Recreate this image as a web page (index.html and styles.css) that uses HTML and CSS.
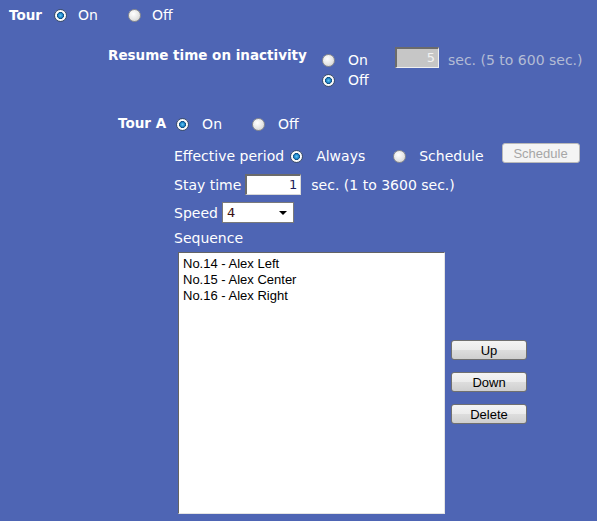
FILE: index.html
```html
<!DOCTYPE html>
<html>
<head>
<meta charset="utf-8">
<link rel="stylesheet" href="styles.css">
</head>
<body>
<div class="page">
  <div class="row row-tour">
    <span class="lbl-b">Tour</span>
    <span class="radio on r-tour-on"></span><span class="opt">On</span>
    <span class="radio r-tour-off"></span><span class="opt">Off</span>
  </div>

  <div class="row-resume">
    <div class="lbl-b resume-lbl">Resume time on inactivity</div>
    <div class="resume-radios">
      <div class="rline"><span class="radio"></span><span class="opt">On</span></div>
      <div class="rline"><span class="radio on"></span><span class="opt">Off</span></div>
    </div>
    <div class="field disabled resume-field">5</div>
    <div class="hint-dis">sec. (5 to 600 sec.)</div>
  </div>

  <div class="row row-toura">
    <span class="lbl-b">Tour A</span>
    <span class="radio on r-a-on"></span><span class="opt">On</span>
    <span class="radio r-a-off"></span><span class="opt">Off</span>
  </div>

  <div class="inner">
    <div class="row row-eff">
      <span class="txt">Effective period</span>
      <span class="radio on r-always"></span><span class="opt">Always</span>
      <span class="radio r-sched"></span><span class="opt">Schedule</span>
      <button class="btn-dis">Schedule</button>
    </div>
    <div class="row row-stay">
      <span class="txt">Stay time</span>
      <span class="field stay-field">1</span>
      <span class="txt sec">sec. (1 to 3600 sec.)</span>
    </div>
    <div class="row row-speed">
      <span class="txt">Speed</span>
      <span class="select"><span class="sel-val">4</span><span class="caret"></span></span>
    </div>
    <div class="row row-seq">
      <span class="txt">Sequence</span>
    </div>
    <div class="seq-area">
      <div class="listbox">
        <div class="item">No.14 - Alex Left</div>
        <div class="item">No.15 - Alex Center</div>
        <div class="item">No.16 - Alex Right</div>
      </div>
      <div class="btns">
        <button class="btn">Up</button>
        <button class="btn">Down</button>
        <button class="btn">Delete</button>
      </div>
    </div>
  </div>
</div>
</body>
</html>
```
FILE: styles.css
```css
html, body {
  margin: 0;
  padding: 0;
  background: #4e65b4;
}
body {
  width: 597px;
  height: 521px;
  overflow: hidden;
  font-family: "DejaVu Sans", Verdana, sans-serif;
  font-size: 14px;
  line-height: 16px;
  color: #ffffff;
}
.page {
  padding-top: 5px;
}
.row {
  display: flex;
  align-items: center;
  white-space: nowrap;
}
.lbl-b {
  font-weight: bold;
  font-size: 13.5px;
}
.radio {
  width: 11px;
  height: 11px;
  border-radius: 50%;
  border: 1px solid #8e8f8f;
  background: radial-gradient(circle at 40% 35%, #ffffff 0%, #e6e6e6 55%, #c9c9c9 100%);
  flex: none;
  box-sizing: content-box;
}
.radio.on {
  border-color: #3d4f6a;
  background: radial-gradient(circle at 50% 50%, #62c4f2 0%, #1e86c8 28%, #114a7c 42%, #ffffff 48%, #f3f3f3 70%, #d9d9d9 100%);
}

/* Tour */
.row-tour {
  height: 20px;
  padding-left: 9px;
}
.r-tour-on { margin-left: 12px; }
.row-tour .opt { margin-left: 11px; }
.r-tour-off { margin-left: 30px; }

/* Resume */
.row-resume {
  display: flex;
  align-items: flex-start;
  margin-top: 21px;
  height: 68px;
  white-space: nowrap;
}
.resume-lbl {
  margin-left: 108px;
  width: 214px;
  margin-top: 1px;
}
.resume-radios {
  margin-top: 4px;
  width: 73px;
  display: flex;
  flex-direction: column;
}
.rline {
  height: 20px;
  display: flex;
  align-items: center;
}
.rline .opt { margin-left: 13px; }
.field {
  box-sizing: border-box;
  height: 21px;
  border-top: 2px solid #6b6b6b;
  border-left: 2px solid #6b6b6b;
  border-right: 1px solid #d8d8d8;
  border-bottom: 1px solid #d8d8d8;
  background: #ffffff;
  color: #1d1d5c;
  text-align: right;
  padding-right: 3px;
  line-height: 18px;
  font-size: 13px;
}
.field.disabled {
  background: #c6c6c6;
  color: #f2f2f2;
  border-right-color: #f0f0f0;
  border-bottom-color: #f0f0f0;
}
.resume-field {
  width: 44px;
  margin-top: 1px;
}
.hint-dis {
  margin-left: 9px;
  margin-top: 6px;
  color: #b3bcd4;
}

/* Tour A */
.row-toura {
  height: 20px;
  padding-left: 118px;
}
.row-toura .lbl-b { position: relative; top: -1px; }
.r-a-on { margin-left: 10px; }
.row-toura .opt { margin-left: 13px; }
.r-a-off { margin-left: 30px; }

/* Inner */
.inner {
  padding-left: 174px;
  margin-top: 12px;
}
.row-eff { height: 20px; }
.r-always { margin-left: 6px; }
.row-eff .opt { margin-left: 13px; }
.r-sched { margin-left: 28px; }
.btn-dis {
  margin-left: 18px;
  width: 78px;
  height: 20px;
  box-sizing: border-box;
  border: 1px solid #b9b9b9;
  border-radius: 3px;
  background: #f4f4f4;
  color: #a6a6a6;
  font-family: "Liberation Sans", Arial, sans-serif;
  font-size: 13px;
  padding: 0;
  position: relative;
  top: -3px;
}
.row-stay {
  height: 21px;
  margin-top: 8px;
}
.stay-field {
  width: 56px;
  margin-left: 4px;
}
.sec { margin-left: 10px; }
.row-speed {
  height: 21px;
  margin-top: 7px;
}
.select {
  margin-left: 4px;
  width: 72px;
  height: 21px;
  box-sizing: border-box;
  border: 1px solid #7a7a7a;
  background: #fff;
  display: flex;
  align-items: center;
  justify-content: space-between;
  padding: 0 6px 0 4px;
  color: #3a1010;
  font-size: 13px;
}
.caret {
  width: 0;
  height: 0;
  border-left: 4px solid transparent;
  border-right: 4px solid transparent;
  border-top: 4px solid #000;
}
.row-seq {
  height: 16px;
  margin-top: 7px;
}
.seq-area {
  display: flex;
  align-items: flex-start;
  margin-top: 6px;
  margin-left: 4px;
}
.listbox {
  width: 267px;
  height: 262px;
  box-sizing: border-box;
  background: #fff;
  border-top: 1px solid #646464;
  border-left: 1px solid #646464;
  border-right: 1px solid #e4e4e4;
  border-bottom: 1px solid #e4e4e4;
  padding: 3px 4px;
  font-family: "Liberation Sans", Arial, sans-serif;
  font-size: 13px;
  color: #000;
}
.item {
  line-height: 16px;
}
.btns {
  display: flex;
  flex-direction: column;
  gap: 12px;
  margin-left: 6px;
  margin-top: 88px;
}
.btn {
  width: 76px;
  height: 20px;
  box-sizing: border-box;
  border: 1px solid #707070;
  border-radius: 3px;
  background: linear-gradient(#f4f4f4 0%, #ebebeb 50%, #dddddd 51%, #cfcfcf 100%);
  color: #000;
  font-family: "Liberation Sans", Arial, sans-serif;
  font-size: 13px;
  padding: 0;
}
```
